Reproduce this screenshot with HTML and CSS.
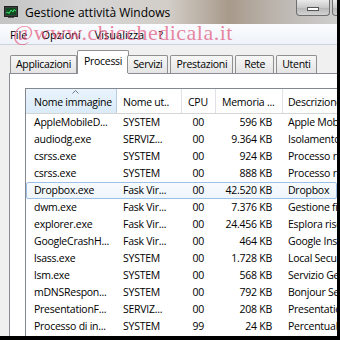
FILE: index.html
```html
<!DOCTYPE html>
<html lang="it">
<head>
    <meta charset="UTF-8">
    <title>Gestione attività Windows</title>
    <link rel="stylesheet" href="styles.css">
</head>
<body>
<div class="Window">
    <div class="Title">
        <svg class="Title-icon" width="14" height="12" viewBox="0 0 14 12">
            <rect x="0.5" y="0.5" width="13" height="10" fill="#3a3f3c" stroke="#1e2220"/>
            <rect x="2" y="2" width="10" height="7" fill="#0f4a22"/>
            <polyline points="2,7 4,6 5,7.5 7,4 9,6 10,3.5 12,5" fill="none" stroke="#3fe36a" stroke-width="1"/>
            <rect x="4" y="11" width="6" height="1" fill="#555"/>
        </svg>
        <span class="Title-text">Gestione attività Windows</span>
        <div class="Title-buttons">
            <span class="Title-btn"><span class="Title-dash"></span></span>
            <span class="Title-btn Title-btn--max"><span class="Title-box"></span></span>
        </div>
    </div>

    <div class="Menu">
        <span class="Menu-item">File</span>
        <span class="Menu-item">Opzioni</span>
        <span class="Menu-item">Visualizza</span>
        <span class="Menu-item">?</span>
    </div>

    <div class="Content">
        <div class="Tabs">
            <span class="Tab">Applicazioni</span>
            <span class="Tab Tab--active">Processi</span>
            <span class="Tab">Servizi</span>
            <span class="Tab">Prestazioni</span>
            <span class="Tab Tab--wide">Rete</span>
            <span class="Tab">Utenti</span>
        </div>
        <div class="Panel">
            <div class="List">
                <div class="List-head">
                    <span class="Col Col-name Col--sorted">
                        <svg class="Sort" width="7" height="4" viewBox="0 0 7 4"><polyline points="0.5,3.5 3.5,0.5 6.5,3.5" fill="none" stroke="#6c7c90" stroke-width="1"/></svg>
                        Nome immagine
                    </span>
                    <span class="Col Col-user">Nome ut..</span>
                    <span class="Col Col-cpu Col-cpu--head">CPU</span>
                    <span class="Col Col-mem Col-mem--head">Memoria ...</span>
                    <span class="Col Col-desc">Descrizione</span>
                </div>
                <div class="Row"><span class="Col Col-name">AppleMobileD...</span><span class="Col Col-user">SYSTEM</span><span class="Col Col-cpu">00</span><span class="Col Col-mem">596 KB</span><span class="Col Col-desc">Apple Mobile Device Service</span></div>
                <div class="Row"><span class="Col Col-name">audiodg.exe</span><span class="Col Col-user">SERVIZ...</span><span class="Col Col-cpu">00</span><span class="Col Col-mem">9.364 KB</span><span class="Col Col-desc">Isolamento grafico</span></div>
                <div class="Row"><span class="Col Col-name">csrss.exe</span><span class="Col Col-user">SYSTEM</span><span class="Col Col-cpu">00</span><span class="Col Col-mem">924 KB</span><span class="Col Col-desc">Processo runtime</span></div>
                <div class="Row"><span class="Col Col-name">csrss.exe</span><span class="Col Col-user">SYSTEM</span><span class="Col Col-cpu">00</span><span class="Col Col-mem">888 KB</span><span class="Col Col-desc">Processo runtime</span></div>
                <div class="Row Row--hover"><span class="Col Col-name">Dropbox.exe</span><span class="Col Col-user">Fask Vir...</span><span class="Col Col-cpu">00</span><span class="Col Col-mem">42.520 KB</span><span class="Col Col-desc">Dropbox</span></div>
                <div class="Row"><span class="Col Col-name">dwm.exe</span><span class="Col Col-user">Fask Vir...</span><span class="Col Col-cpu">00</span><span class="Col Col-mem">7.376 KB</span><span class="Col Col-desc">Gestione finestre</span></div>
                <div class="Row"><span class="Col Col-name">explorer.exe</span><span class="Col Col-user">Fask Vir...</span><span class="Col Col-cpu">00</span><span class="Col Col-mem">24.456 KB</span><span class="Col Col-desc">Esplora risorse</span></div>
                <div class="Row"><span class="Col Col-name">GoogleCrashH...</span><span class="Col Col-user">Fask Vir...</span><span class="Col Col-cpu">00</span><span class="Col Col-mem">464 KB</span><span class="Col Col-desc">Google Installer</span></div>
                <div class="Row"><span class="Col Col-name">lsass.exe</span><span class="Col Col-user">SYSTEM</span><span class="Col Col-cpu">00</span><span class="Col Col-mem">1.728 KB</span><span class="Col Col-desc">Local Security</span></div>
                <div class="Row"><span class="Col Col-name">lsm.exe</span><span class="Col Col-user">SYSTEM</span><span class="Col Col-cpu">00</span><span class="Col Col-mem">568 KB</span><span class="Col Col-desc">Servizio Gestione</span></div>
                <div class="Row"><span class="Col Col-name">mDNSRespon...</span><span class="Col Col-user">SYSTEM</span><span class="Col Col-cpu">00</span><span class="Col Col-mem">792 KB</span><span class="Col Col-desc">Bonjour Service</span></div>
                <div class="Row"><span class="Col Col-name">PresentationF...</span><span class="Col Col-user">SERVIZ...</span><span class="Col Col-cpu">00</span><span class="Col Col-mem">208 KB</span><span class="Col Col-desc">Presentation Font</span></div>
                <div class="Row"><span class="Col Col-name">Processo di in...</span><span class="Col Col-user">SYSTEM</span><span class="Col Col-cpu">99</span><span class="Col Col-mem">24 KB</span><span class="Col Col-desc">Percentuale di tempo</span></div>
                <div class="Row"><span class="Col Col-name">services.exe</span><span class="Col Col-user">SYSTEM</span><span class="Col Col-cpu">00</span><span class="Col Col-mem">3.212 KB</span><span class="Col Col-desc">Applicazione</span></div>
            </div>
        </div>
    </div>

    <span class="Watermark">@www.chicchedicala.it</span>
</div>
</body>
</html>
```

FILE: styles.css
```css
html, body {
    margin: 0;
    width: 340px;
    height: 340px;
    background: #000;
    overflow: hidden;
}
body {
    font-family: "Open Sans", "Noto Sans", sans-serif;
    color: #000;
}
.Window {
    position: relative;
    width: 337px;
    height: 336px;
    display: flex;
    flex-direction: column;
    background: #f0f0f0;
    overflow: hidden;
}

/* title bar */
.Title {
    height: 24px;
    flex: none;
    display: flex;
    align-items: center;
    padding-left: 4px;
    background: linear-gradient(90deg, #c4c4c4, #d6d6d6 25%, #d2cdc7 50%, #a89a8b 68%, #b9b2aa 80%, #cfcfcf);
}
.Title-icon {
    margin-top: -1px;
}
.Title-text {
    margin-left: 7px;
    font-size: 12px;
}
.Title-buttons {
    margin: 0 -23px 0 auto;
    align-self: flex-start;
    display: flex;
    gap: 2px;
}
.Title-btn {
    width: 32px;
    height: 15px;
    display: flex;
    align-items: center;
    justify-content: center;
    border: 1px solid #6f6f6f;
    border-top: none;
    border-radius: 0 0 4px 4px;
    background: linear-gradient(#eaeaea, #c9c9c9 50%, #b4b4b4 51%, #d4d4d4);
}
.Title-btn--max {
    width: 26px;
}
.Title-dash {
    width: 10px;
    height: 2px;
    background: #fff;
    border: 1px solid #555;
    margin-top: 2px;
}
.Title-box {
    width: 8px;
    height: 6px;
    border: 2px solid #fff;
    outline: 1px solid #555;
}

/* menu */
.Menu {
    height: 20px;
    flex: none;
    display: flex;
    align-items: center;
    padding-left: 3px;
    border-bottom: 1px solid #cdd4de;
    background: linear-gradient(#fbfcfe, #eef3fa);
    font-size: 11px;
}
.Menu-item {
    padding: 0 7px;
}

/* tabs */
.Content {
    flex: 1;
    display: flex;
    flex-direction: column;
    padding-top: 5px;
    min-height: 0;
}
.Tabs {
    height: 23px;
    display: flex;
    align-items: flex-end;
    padding-left: 10px;
    position: relative;
    z-index: 1;
}
.Tab {
    height: 17px;
    padding: 0 5px;
    margin-right: 2px;
    border: 1px solid #8e8f8f;
    border-bottom: none;
    border-radius: 2px 2px 0 0;
    background: linear-gradient(#f7f7f7, #e4e4e4);
    font-size: 10.5px;
    letter-spacing: -0.3px;
    line-height: 17px;
    text-align: center;
}
.Tab--wide {
    min-width: 27px;
}
.Tab--active {
    height: 23px;
    margin: 0 0 -1px -2px;
    padding: 0 6px;
    background: #fff;
    line-height: 20px;
}
.Tab--active + .Tab {
    margin-left: -2px;
}
.Panel {
    flex: 1;
    min-height: 0;
    margin-left: 9px;
    padding: 14px 0 0 15px;
    background: #fff;
    border-top: 1px solid #898c95;
    border-left: 1px solid #898c95;
}

/* process list */
.List {
    border-top: 1px solid #828790;
    border-left: 1px solid #828790;
    font-size: 10.5px;
    letter-spacing: -0.25px;
}
.List-head {
    height: 24px;
    display: flex;
    border-bottom: 1px solid #d5d5d5;
}
.List-head .Col {
    position: relative;
    line-height: 26px;
    border-right: 1px solid #dfe3e8;
}
.Col--sorted {
    background: linear-gradient(#e9f3fc, #dbebf8);
    border-right-color: #b8cde3 !important;
}
.Sort {
    position: absolute;
    top: 1px;
    left: 46px;
}
.Row {
    height: 17px;
    display: flex;
    box-sizing: border-box;
    line-height: 17px;
}
.Row--hover {
    border: 1px solid #9ec0e6;
    border-radius: 2px;
    background: linear-gradient(#f8fbfe, #eef5fc);
    line-height: 15px;
}
.Row--hover .Col-name {
    width: 90px;
    padding-left: 7px;
}
.Col {
    flex: none;
    box-sizing: border-box;
    white-space: nowrap;
    overflow: hidden;
}
.Col-name {
    width: 91px;
    padding-left: 8px;
}
.Col-user {
    width: 65px;
    padding-left: 6px;
}
.Col-cpu {
    width: 34px;
    padding-right: 12px;
    text-align: right;
}
.Col-cpu--head {
    padding: 0 0 0 6px;
    text-align: left;
}
.Col-mem {
    width: 67px;
    padding-right: 11px;
    text-align: right;
}
.Col-mem--head {
    padding: 0 0 0 6px;
    text-align: left;
}
.Col-desc {
    width: 80px;
    padding-left: 5px;
}

/* overlay watermark */
.Watermark {
    position: absolute;
    top: 20px;
    left: 13px;
    font-family: "Liberation Serif", serif;
    font-size: 22px;
    color: rgba(226, 80, 118, 0.7);
    letter-spacing: 0.5px;
    pointer-events: none;
}
```
